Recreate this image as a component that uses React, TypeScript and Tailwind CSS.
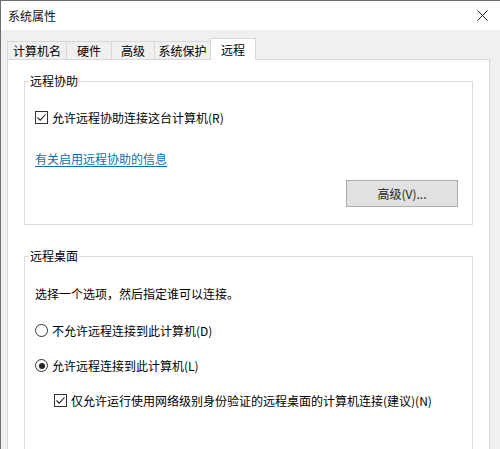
import React from "react";

const font = { fontFamily: '"Noto Sans CJK SC", "Noto Sans", sans-serif' };

function CheckBox({ checked }: { checked: boolean }) {
  return (
    <span className="w-[13px] h-[13px] border border-[#333333] bg-white flex items-center justify-center shrink-0">
      {checked && (
        <svg width="11" height="11" viewBox="0 0 11 11">
          <path d="M1.5 5.5 L4.2 8.2 L9.5 2.5" fill="none" stroke="#222" strokeWidth="1.1" />
        </svg>
      )}
    </span>
  );
}

function Radio({ checked }: { checked: boolean }) {
  return (
    <span className="w-[13px] h-[13px] rounded-full border border-[#333333] bg-white flex items-center justify-center shrink-0">
      {checked && <span className="w-[6px] h-[6px] rounded-full bg-[#222]" />}
    </span>
  );
}

const tabs = ["计算机名", "硬件", "高级", "系统保护"];

export default function App() {
  return (
    <div
      className="w-[500px] h-[449px] overflow-hidden bg-[#f0f0f0] border-l border-t border-[#6e6e6e] flex flex-col text-[12px] text-black leading-none"
      style={font}
    >
      {/* Title bar */}
      <div className="h-[29px] bg-white flex items-center justify-between pl-[7px] pr-[12px] shrink-0">
        <span className="text-[12px] text-[#111]">系统属性</span>
        <svg width="11" height="11" viewBox="0 0 11 11">
          <path d="M0.5 0.5 L10.5 10.5 M10.5 0.5 L0.5 10.5" stroke="#222" strokeWidth="1" fill="none" />
        </svg>
      </div>

      {/* Tabs */}
      <div className="h-[29px] flex items-end pl-[6px] shrink-0">
        {tabs.map((t, i) => (
          <div
            key={t}
            className={
              "h-[19px] flex items-center justify-center border-t border-l border-[#d9d9d9] bg-[#f0f0f0] -mb-px " +
              (i === 0 ? "w-[59px]" : i === 1 ? "w-[45px]" : i === 2 ? "w-[43px]" : "w-[56px]")
            }
          >
            {t}
          </div>
        ))}
        <div className="h-[22px] w-[46px] flex items-center justify-center border-t border-l border-r border-[#d9d9d9] bg-white relative z-10 -mb-px">
          远程
        </div>
      </div>

      {/* Panel */}
      <div className="ml-[6px] w-[483px] flex-1 bg-white border border-[#d9d9d9] px-[16px] pt-[21px]">
        {/* 远程协助 */}
        <div className="relative border border-[#dcdcdc] h-[144px] pl-[10px]">
          <span className="absolute -top-[7px] left-[4px] bg-white px-[1px]">远程协助</span>
          <div className="flex items-center gap-[4px] mt-[29px]">
            <CheckBox checked />
            <span>允许远程协助连接这台计算机(R)</span>
          </div>
          <div className="mt-[29px]">
            <span className="text-[#0e6fb3] underline underline-offset-2 decoration-[#0e6fb3]">有关启用远程协助的信息</span>
          </div>
          <div className="flex justify-end pr-[14px] mt-[15px]">
            <div className="w-[112px] h-[27px] bg-[#e1e1e1] border border-[#adadad] flex items-center justify-center text-[#222]">
              高级(V)...
            </div>
          </div>
        </div>

        {/* 远程桌面 */}
        <div className="relative border border-[#dcdcdc] border-b-0 h-[220px] mt-[31px] pl-[10px]">
          <span className="absolute -top-[7px] left-[4px] bg-white px-[1px]">远程桌面</span>
          <div className="mt-[31px]">选择一个选项，然后指定谁可以连接。</div>
          <div className="flex items-center gap-[4px] mt-[24px]">
            <Radio checked={false} />
            <span>不允许远程连接到此计算机(D)</span>
          </div>
          <div className="flex items-center gap-[4px] mt-[22px]">
            <Radio checked />
            <span>允许远程连接到此计算机(L)</span>
          </div>
          <div className="flex items-center gap-[4px] mt-[22px] pl-[19px]">
            <CheckBox checked />
            <span>仅允许运行使用网络级别身份验证的远程桌面的计算机连接(建议)(N)</span>
          </div>
        </div>
      </div>
    </div>
  );
}
